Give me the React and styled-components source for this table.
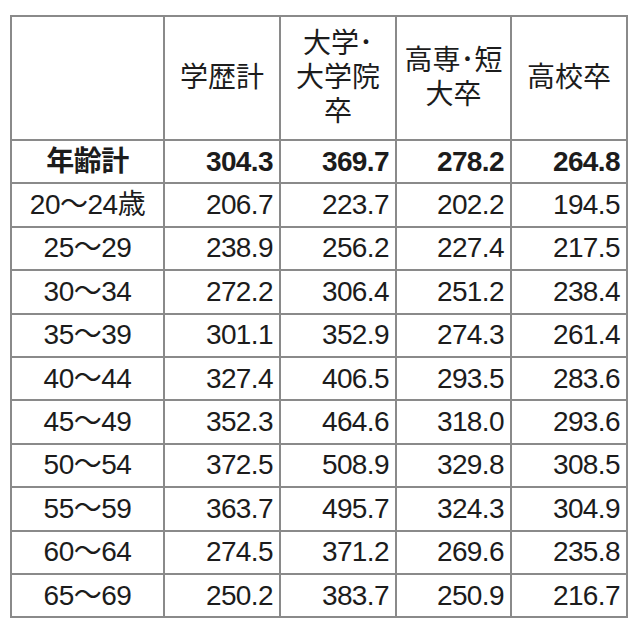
import styled, { createGlobalStyle } from 'styled-components'

const GlobalStyle = createGlobalStyle`
  html, body {
    margin: 0;
    padding: 0;
    background: #ffffff;
  }
`;

const Page = styled.div`
  width: 640px;
  height: 629px;
  padding: 15px 0 0 10px;
  box-sizing: border-box;
  background: #fff;
  font-family: "Liberation Sans", "Noto Sans CJK JP", sans-serif;
  color: #1c1c1c;
`;

const Table = styled.table`
  border-collapse: collapse;
  table-layout: fixed;
  width: 616px;
  border: 2px solid #8a8a8a;
`;

const HeadCell = styled.th`
  height: 122px;
  padding: 0 4px;
  border: 2px solid #8a8a8a;
  font-weight: normal;
  font-size: 28px;
  line-height: 34px;
  text-align: center;
  vertical-align: middle;
`;

const Row = styled.tr`
  height: 43.4px;
  font-weight: ${(props) => (props.$total ? 'bold' : 'normal')};
`;

const LabelCell = styled.td`
  border: 2px solid #8a8a8a;
  padding: 0;
  font-size: 28px;
  line-height: 30px;
  text-align: center;
  letter-spacing: -0.5px;
`;

const NumCell = styled.td`
  border: 2px solid #8a8a8a;
  padding: 0 6px 0 0;
  font-size: 28px;
  line-height: 30px;
  text-align: right;
  letter-spacing: -0.6px;
`;

const columns = [
  { w: 153, label: [] },
  { w: 116, label: ['学歴計'] },
  { w: 116, label: ['大学･', '大学院', '卒'] },
  { w: 115, label: ['高専･短', '大卒'] },
  { w: 116, label: ['高校卒'] },
]

const rows = [
  ['年齢計', '304.3', '369.7', '278.2', '264.8'],
  ['20～24歳', '206.7', '223.7', '202.2', '194.5'],
  ['25～29', '238.9', '256.2', '227.4', '217.5'],
  ['30～34', '272.2', '306.4', '251.2', '238.4'],
  ['35～39', '301.1', '352.9', '274.3', '261.4'],
  ['40～44', '327.4', '406.5', '293.5', '283.6'],
  ['45～49', '352.3', '464.6', '318.0', '293.6'],
  ['50～54', '372.5', '508.9', '329.8', '308.5'],
  ['55～59', '363.7', '495.7', '324.3', '304.9'],
  ['60～64', '274.5', '371.2', '269.6', '235.8'],
  ['65～69', '250.2', '383.7', '250.9', '216.7'],
]

function App() {
  return (
    <>
      <GlobalStyle />
      <Page>
        <Table>
          <colgroup>
            {columns.map((c, i) => (
              <col key={`col_${i}`} style={{ width: c.w }} />
            ))}
          </colgroup>
          <thead>
            <tr>
              {columns.map((c, i) => (
                <HeadCell key={`head_${i}`}>
                  {c.label.map((line, j) => (
                    <div key={j}>{line}</div>
                  ))}
                </HeadCell>
              ))}
            </tr>
          </thead>
          <tbody>
            {rows.map((r, i) => (
              <Row key={`row_${i}`} $total={i === 0}>
                <LabelCell>{r[0]}</LabelCell>
                {r.slice(1).map((v, j) => (
                  <NumCell key={j}>{v}</NumCell>
                ))}
              </Row>
            ))}
          </tbody>
        </Table>
      </Page>
    </>
  )
}

export default App
